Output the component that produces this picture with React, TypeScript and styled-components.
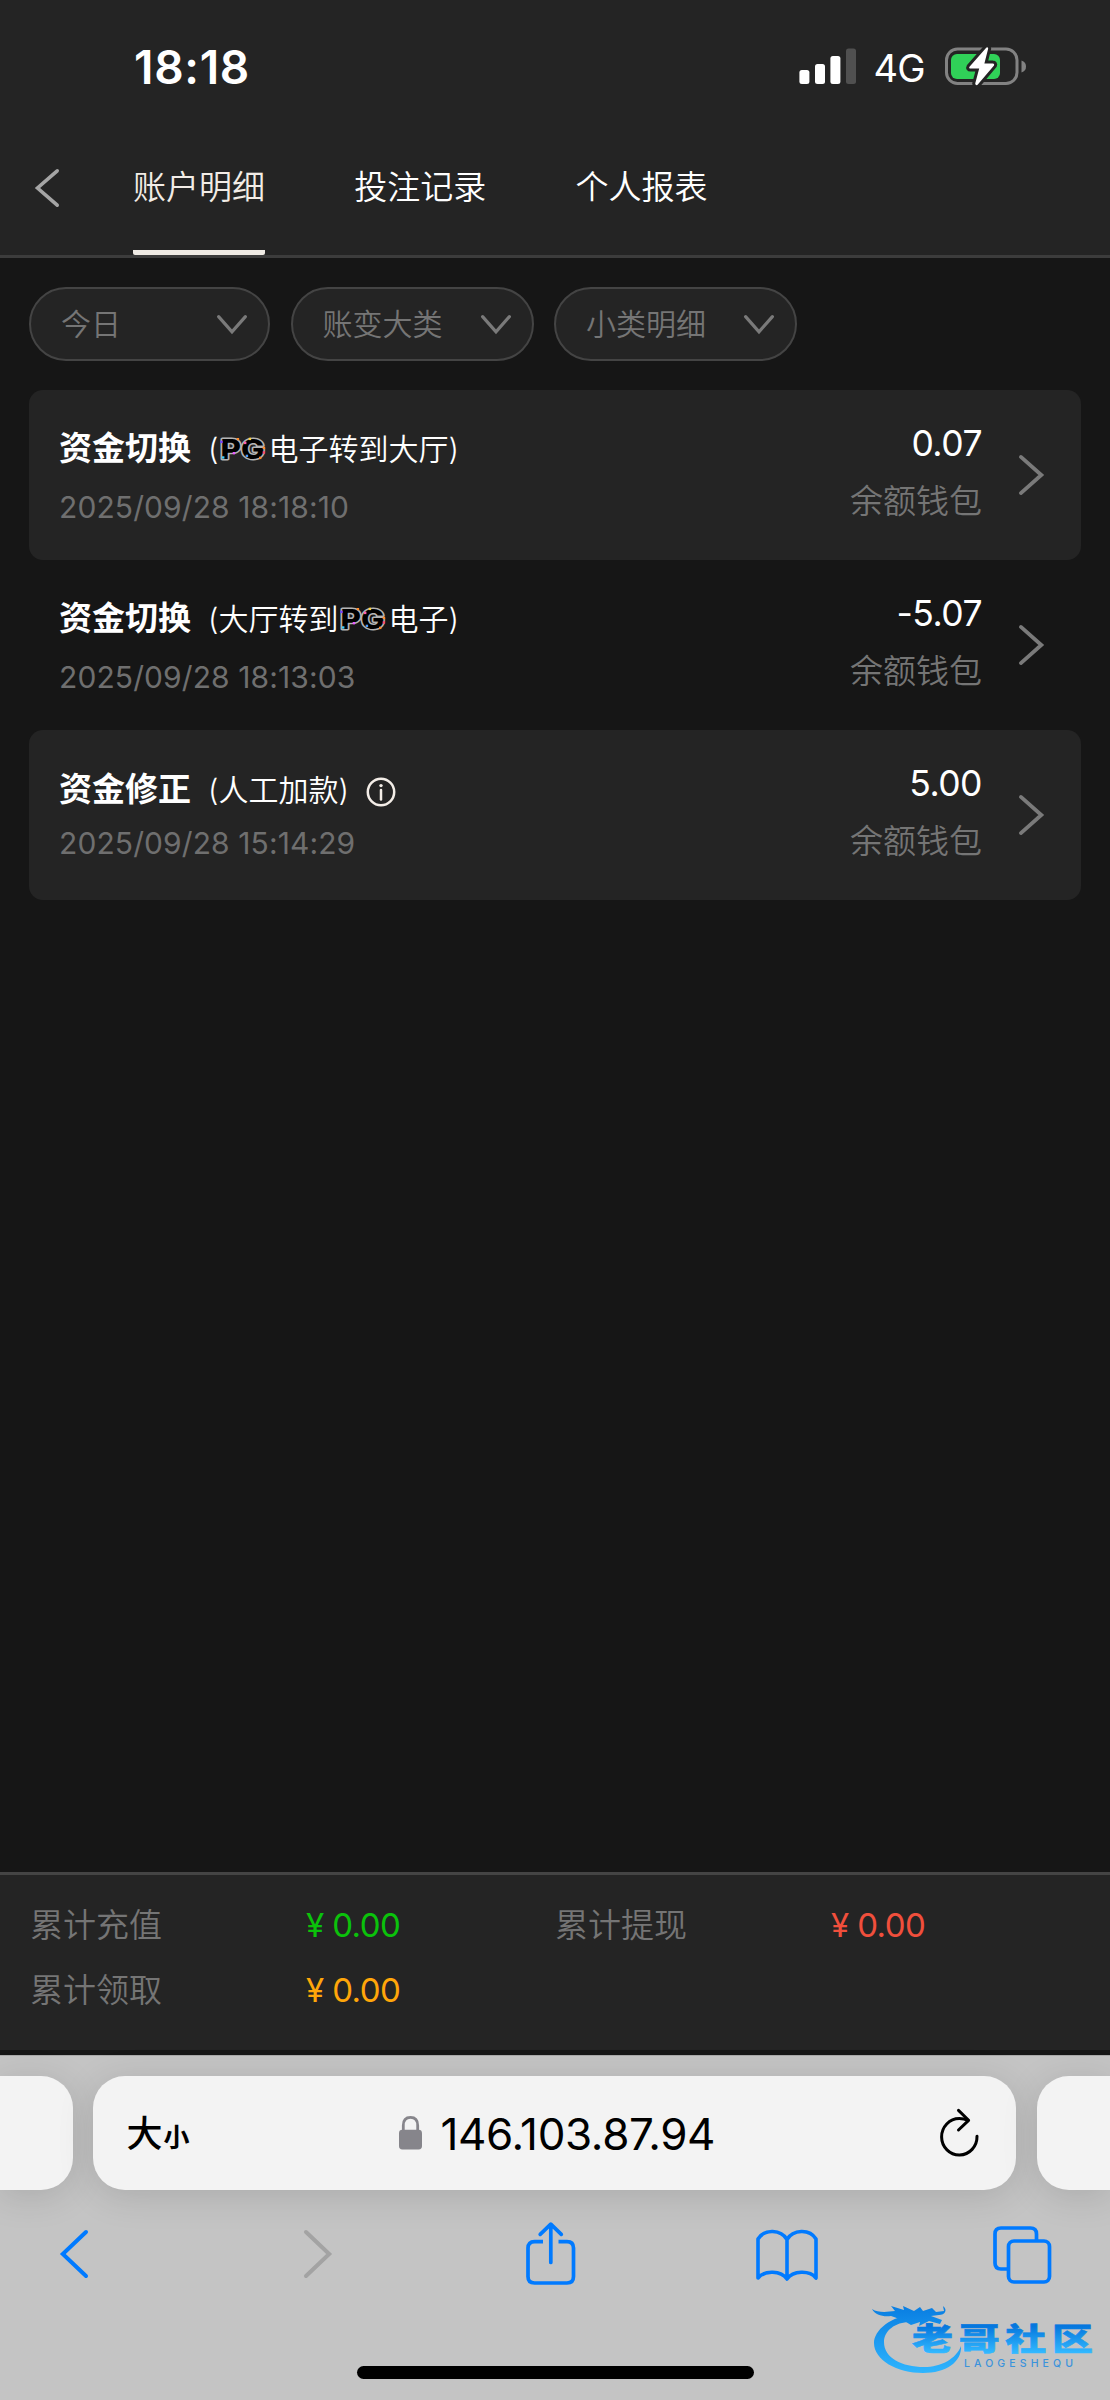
import React from "react";
import styled, { createGlobalStyle } from "styled-components";

const GlobalStyle = createGlobalStyle`
  * { box-sizing: border-box; }
  body {
    margin: 0;
    background: #161616;
    font-family: Inter, "Noto Sans CJK SC", sans-serif;
    -webkit-font-smoothing: antialiased;
  }
  svg { display: block; flex: none; overflow: visible; }
`;

const Screen = styled.div`
  width: 1110px;
  height: 2400px;
  display: flex;
  flex-direction: column;
  background: #161616;
  overflow: hidden;
`;

const Header = styled.header`
  height: 258px;
  background: #242424;
  border-bottom: 3px solid #3c3c3c;
  display: flex;
  flex-direction: column;
`;

const StatusBar = styled.div`
  height: 132px;
  padding: 0 83px 0 134px;
  display: flex;
  align-items: center;
  color: #fff;
`;

const Clock = styled.div`
  font-size: 46px;
  font-weight: 600;
  line-height: 50px;
  letter-spacing: 0.7px;
  margin: 2px auto 0 0;
`;

const Network = styled.div`
  font-size: 38px;
  font-weight: 400;
  line-height: 44px;
  letter-spacing: -0.7px;
  margin: 3px 20px 0 18px;
`;

const NavBar = styled.nav`
  flex: 1;
  display: flex;
  padding-left: 35px;
`;

const BackButton = styled.div`
  width: 98px;
  padding-top: 37px;
`;

const TabList = styled.div`
  display: flex;
  gap: 89.3px;
`;

const Tab = styled.div<{ $active?: boolean }>`
  height: 123px;
  padding-top: 31px;
  font-size: 33px;
  line-height: 48px;
  font-weight: 350;
  color: ${(p) => (p.$active ? "#f2ece6" : "#fff")};
  border-bottom: 5px solid ${(p) => (p.$active ? "#f0ebe5" : "transparent")};
  border-radius: 2px;
`;

const Filters = styled.div`
  display: flex;
  gap: 20.5px;
  padding: 29px 29px 0;
`;

const Filter = styled.div<{ $width: number }>`
  width: ${(p) => p.$width}px;
  height: 74px;
  border: 2px solid #444;
  border-radius: 37px;
  background: #242424;
  color: #757575;
  font-size: 30px;
  font-weight: 350;
  line-height: 70px;
  padding: 0 21px 0 30px;
  display: flex;
  align-items: center;
  justify-content: space-between;
`;

const Records = styled.div`
  flex: 1;
  padding: 29px 29px 0 29px;
`;

const Record = styled.div<{ $filled: boolean }>`
  height: 170px;
  border-radius: 14px;
  background: ${(p) => (p.$filled ? "#242424" : "transparent")};
  display: flex;
  padding: 0 37px 0 30px;
`;

const RecordMain = styled.div<{ $compact?: boolean }>`
  flex: 1;
  display: flex;
  flex-direction: column;
  padding-top: ${(p) => (p.$compact ? 35 : 34)}px;
  gap: ${(p) => (p.$compact ? 12 : 17)}px;
`;

const TitleRow = styled.div`
  display: flex;
  align-items: center;
  height: 48px;
  color: #fff;
`;

const Title = styled.div`
  font-size: 33px;
  font-weight: 700;
  line-height: 48px;
  width: 149px;
`;

const Detail = styled.div`
  display: flex;
  align-items: center;
  font-size: 30px;
  font-weight: 350;
  line-height: 48px;
  padding-top: 2px;
`;

const InfoSlot = styled.div`
  margin: 6px 0 0 17px;
`;

const Stamp = styled.div`
  font-size: 30px;
  line-height: 36px;
  font-weight: 400;
  letter-spacing: 0.1px;
  color: #6f6f6f;
`;

const RecordSide = styled.div`
  display: flex;
  flex-direction: column;
  align-items: flex-end;
  padding-top: 33px;
  margin-right: 37px;
`;

const Amount = styled.div`
  font-size: 35.5px;
  line-height: 42px;
  color: #fff;
  letter-spacing: -0.5px;
`;

const Wallet = styled.div`
  margin-top: 12px;
  font-size: 33px;
  line-height: 48px;
  font-weight: 350;
  color: #757575;
`;

const Arrow = styled.div`
  display: flex;
  align-items: center;
`;

const Summary = styled.section`
  height: 178px;
  margin-bottom: 5px;
  border-top: 3px solid #444;
  background: #242424;
  padding: 25px 30px 0;
  display: grid;
  grid-template-columns: 525px 525px;
  grid-auto-rows: 65px;
`;

const SummaryItem = styled.div`
  display: grid;
  grid-template-columns: 276px 1fr;
  font-size: 33px;
  line-height: 50px;
  font-weight: 350;
  color: #757575;
`;

const SummaryValue = styled.div<{ $color: string }>`
  color: ${(p) => p.$color};
  font-weight: 400;
  letter-spacing: -0.6px;
`;

const Browser = styled.footer`
  position: relative;
  height: 345px;
  background: #c4c4c4;
  border-top: 1px solid #a9a9a9;
  display: flex;
  flex-direction: column;
`;

const AddressRow = styled.div`
  display: grid;
  grid-template-columns: 72.7px 922.6px 73px;
  column-gap: 20.8px;
  padding-top: 20px;
`;

const BarCard = styled.div<{ $side?: "left" | "right" }>`
  height: 114px;
  background: #f3f3f3;
  border-radius: ${(p) =>
    p.$side === "left" ? "0 32px 32px 0" : p.$side === "right" ? "32px 0 0 32px" : "32px"};
  box-shadow: 0 6px 36px rgba(0, 0, 0, 0.13);
  display: flex;
  align-items: center;
  padding: ${(p) => (p.$side ? "0" : "0 36px 0 33px")};
  color: #000;
`;

const TextSize = styled.div`
  display: flex;
  align-items: baseline;
  gap: 1px;
  font-weight: 500;
  font-size: 36px;
  line-height: 50px;
  width: 273px;
  margin-top: 5px;
  small { font-size: 26px; font-weight: 700; }
`;

const Address = styled.div`
  display: flex;
  align-items: center;
  flex: 1;
  gap: 18px;
`;

const Host = styled.div`
  font-size: 44px;
  line-height: 54px;
  letter-spacing: -0.35px;
  margin-top: 1px;
`;

const Toolbar = styled.div`
  display: grid;
  grid-template-columns: 244px 222px 230px 237px 60px;
  padding: 28px 0 0 60px;
  height: 100px;
  align-items: start;
`;

const Tool = styled.div<{ $top: number }>`
  padding-top: ${(p) => p.$top}px;
`;

const HomeIndicator = styled.div`
  width: 397px;
  height: 13px;
  margin: auto auto 21px;
  border-radius: 7px;
  background: #000;
`;

const Watermark = styled.div`
  position: absolute;
  left: 870px;
  top: 246px;
`;

const Chevron = ({ w, h, dir, color, stroke }: {
  w: number; h: number; dir: "left" | "right" | "down"; color: string; stroke: number;
}) => {
  const s = stroke / 2;
  const points = {
    left: `${w - s},${s} ${s * 1.4},${h / 2} ${w - s},${h - s}`,
    right: `${s},${s} ${w - s * 1.4},${h / 2} ${s},${h - s}`,
    down: `${s},${s} ${w / 2},${h - s * 1.4} ${w - s},${s}`,
  }[dir];
  return (
    <svg width={w} height={h}>
      <polyline points={points} fill="none" stroke={color} strokeWidth={stroke} strokeLinecap="round" />
    </svg>
  );
};

const Signal = () => (
  <svg width="57" height="36" fill="#fff">
    <rect x="0.4" y="22" width="10" height="14" rx="2.5" />
    <rect x="16" y="16" width="10" height="20" rx="2.5" />
    <rect x="31.4" y="8" width="10" height="28" rx="2.5" />
    <rect x="47" y="0.5" width="10" height="35.5" rx="2.5" fill="#505050" />
  </svg>
);

const Battery = () => (
  <svg width="82" height="42" viewBox="0 0 82 42">
    <rect x="1.5" y="4" width="70.5" height="34.5" rx="11" fill="none" stroke="#828282" strokeWidth="3" />
    <path d="M76.5 15.5 Q81 17 81 21.5 Q81 26 76.5 27.5 Z" fill="#828282" />
    <rect x="6" y="9" width="49" height="25" rx="6" fill="#30d158" />
    <path
      d="M41 3 L24.5 21.8 Q23.5 23.6 25.6 23.6 L34.2 23.6 L30.2 38.6 Q30.6 41 32.6 39.8 L49 20.4 Q49.8 18.6 47.8 18.6 L39.4 18.4 L43.2 3.6 Q42.6 1.4 41 3 Z"
      fill="#fff" stroke="#242424" strokeWidth="6" strokeLinejoin="round" paintOrder="stroke"
    />
  </svg>
);

const sparks: [number, number, string][] = [
  [3.3, 6.7, "#7a3cff"], [19.7, 4, "#ff8a2a"], [15.7, 18, "#e65bff"], [5, 22.3, "#45d0ff"],
  [31.7, 3.7, "#ffd23c"], [27, 7.7, "#ff5fb0"], [45.7, 12.7, "#ff8a2a"], [28.7, 20.7, "#4a9cff"],
  [45.7, 17.3, "#ff4668"], [42, 22.7, "#ff8a2a"],
];

const PgMark = () => (
  <svg width="50" height="36" viewBox="0 -4 50 36">
    <text
      x="2.5" y="23.5" textLength="44" lengthAdjust="spacingAndGlyphs" fontFamily="Inter" fontWeight="800"
      fontSize="27" fill="#000" stroke="#b4b4b4" strokeWidth="3" strokeLinejoin="round" paintOrder="stroke"
    >PG</text>
    {sparks.map(([x, y, c]) => <rect key={`${x}-${y}`} x={x - 1} y={y - 1} width="2.4" height="2.4" fill={c} />)}
  </svg>
);

const Info = () => (
  <svg width="30" height="30" viewBox="0 0 30 30">
    <circle cx="15" cy="15" r="13.2" fill="none" stroke="#f3ede7" strokeWidth="2.5" />
    <circle cx="15" cy="8.6" r="1.7" fill="#f3ede7" />
    <path d="M15 13 V22.5" stroke="#f3ede7" strokeWidth="2.5" strokeLinecap="round" />
  </svg>
);

const Lock = () => (
  <svg width="23" height="34" viewBox="0 0 23 34">
    <path d="M4.3 15 V9.5 Q4.3 1.4 11.5 1.4 Q18.7 1.4 18.7 9.5 V15" fill="none" stroke="#86858b" strokeWidth="2.8" />
    <rect x="0" y="13.8" width="23" height="19.6" rx="3.4" fill="#86858b" />
  </svg>
);

const Reload = () => (
  <svg width="42" height="50" viewBox="0 0 42 50" fill="none" stroke="#000" strokeWidth="3" strokeLinecap="round" strokeLinejoin="round">
    <path d="M30 12.3 Q26 10.6 21.3 10.6 A17.7 18.2 0 1 0 39 28.3" />
    <path d="M20.5 2.4 L30.6 12.3 L20.5 22" />
  </svg>
);

const Share = () => (
  <svg width="50" height="64" viewBox="0 0 50 64" fill="none" stroke="#007aff" strokeWidth="3.7" strokeLinejoin="round">
    <path d="M17 19.6 H8.5 Q2 19.6 2 26 V54.5 Q2 61 8.5 61 H41 Q47.5 61 47.5 54.5 V26 Q47.5 19.6 41 19.6 H32.5" />
    <path d="M24.8 40.5 V3 M14.2 12.4 L24.8 2.2 L35.3 12.4" strokeLinecap="round" />
  </svg>
);

const Book = () => (
  <svg width="62" height="54" viewBox="0 0 62 54" fill="none" stroke="#007aff" strokeWidth="3.6" strokeLinejoin="round">
    <path d="M31 10.5 C25 0.5 8.5 -0.5 2 10 V49 C8.5 41 25 41.5 31 50 C37 41.5 53.5 41 60 49 V10 C53.5 -0.5 37 0.5 31 10.5 Z M31 10.5 V50" />
  </svg>
);

const Windows = () => (
  <svg width="60" height="60" viewBox="0 0 60 60" fill="none" stroke="#007aff" strokeWidth="3.7">
    <rect x="15.5" y="15" width="41" height="41" rx="5.5" />
    <path d="M43.5 15 V8 Q43.5 2 37.5 2 H8 Q2 2 2 8 V37 Q2 43 8 43 H16" />
  </svg>
);

const CommunityLogo = () => (
  <svg width="226" height="74" viewBox="0 0 226 74">
    <defs>
      <linearGradient id="sea" gradientUnits="userSpaceOnUse" x1="0" y1="6" x2="0" y2="72">
        <stop offset="0" stopColor="#0a7fe2" />
        <stop offset="1" stopColor="#2fb6ff" />
      </linearGradient>
      <linearGradient id="ink" gradientUnits="userSpaceOnUse" x1="0" y1="3" x2="0" y2="38">
        <stop offset="0" stopColor="#0577de" />
        <stop offset="1" stopColor="#32b8ff" />
      </linearGradient>
    </defs>
    <g fill="url(#sea)">
      <path d="M46 13 C20 13 4 29 4 41 C4 58 27 71 53 71 C76 71 92 60 91 44 C86 57 71 65 54 65 C32 65 14 56 14 40 C14 29 25 20 40 20 Z" />
      <path d="M2 7 C8 11 17 10 25 9 L21 4 L34 8 L33 4 L44 9 L50 5 L53 9 L62 6 L66 10 L74 9 L73 4 C78 8 75 13 69 13 L61 14 L72 18 L70 22 L59 19 L49 24 L50 20 L41 23 L36 20 C28 17 25 15 21 14 C13 15 5 13 2 7 Z" />
    </g>
    <g transform="translate(0 22) scale(1 0.75)">
      <text x="42" y="34" fontFamily="Noto Sans CJK SC" fontWeight="900" fontSize="41" textLength="181"
        fill="url(#ink)" stroke="url(#ink)" strokeWidth="0.8">老哥社区</text>
    </g>
    <text x="94" y="64.5" fontFamily="Inter" fontWeight="500" fontSize="10.5" textLength="109" fill="#3b93dc">LAOGESHEQU</text>
  </svg>
);

type Entry = { title: string; detail: React.ReactNode; time: string; amount: string; info?: boolean };

const entries: Entry[] = [
  { title: "资金切换", detail: <>(<PgMark />电子转到大厅)</>, time: "2025/09/28 18:18:10", amount: "0.07" },
  { title: "资金切换", detail: <>(大厅转到<PgMark />电子)</>, time: "2025/09/28 18:13:03", amount: "-5.07" },
  { title: "资金修正", detail: "(人工加款)", time: "2025/09/28 15:14:29", amount: "5.00", info: true },
];

const filters = [
  { label: "今日", width: 241 },
  { label: "账变大类", width: 243 },
  { label: "小类明细", width: 243 },
];

const totals = [
  { label: "累计充值", color: "#0bc20b" },
  { label: "累计提现", color: "#f04f3c" },
  { label: "累计领取", color: "#ffa60a" },
];

export default function App() {
  return (
    <>
      <GlobalStyle />
      <Screen>
        <Header>
          <StatusBar>
            <Clock>18:18</Clock>
            <Signal />
            <Network>4G</Network>
            <Battery />
          </StatusBar>
          <NavBar>
            <BackButton><Chevron w={24} h={38} dir="left" color="#a5a5a5" stroke={3.6} /></BackButton>
            <TabList>
              <Tab $active>账户明细</Tab>
              <Tab>投注记录</Tab>
              <Tab>个人报表</Tab>
            </TabList>
          </NavBar>
        </Header>

        <Filters>
          {filters.map((f) => (
            <Filter key={f.label} $width={f.width}>
              {f.label}
              <Chevron w={30} h={19} dir="down" color="#7a7a7a" stroke={3.2} />
            </Filter>
          ))}
        </Filters>

        <Records>
          {entries.map((e, i) => (
            <Record key={e.time} $filled={i % 2 === 0}>
              <RecordMain $compact={e.info}>
                <TitleRow>
                  <Title>{e.title}</Title>
                  <Detail>{e.detail}</Detail>
                  {e.info && <InfoSlot><Info /></InfoSlot>}
                </TitleRow>
                <Stamp>{e.time}</Stamp>
              </RecordMain>
              <RecordSide>
                <Amount>{e.amount}</Amount>
                <Wallet>余额钱包</Wallet>
              </RecordSide>
              <Arrow><Chevron w={25} h={40} dir="right" color="#7a7a7a" stroke={3.8} /></Arrow>
            </Record>
          ))}
        </Records>

        <Summary>
          {totals.map((t) => (
            <SummaryItem key={t.label}>
              <div>{t.label}</div>
              <SummaryValue $color={t.color}>¥ 0.00</SummaryValue>
            </SummaryItem>
          ))}
        </Summary>

        <Browser>
          <AddressRow>
            <BarCard $side="left" />
            <BarCard>
              <TextSize>大<small>小</small></TextSize>
              <Address><Lock /><Host>146.103.87.94</Host></Address>
              <Reload />
            </BarCard>
            <BarCard $side="right" />
          </AddressRow>
          <Toolbar>
            <Tool $top={12}><Chevron w={28} h={48} dir="left" color="#007aff" stroke={4} /></Tool>
            <Tool $top={12}><Chevron w={28} h={48} dir="right" color="#a3a3a3" stroke={4} /></Tool>
            <Tool $top={4}><Share /></Tool>
            <Tool $top={11}><Book /></Tool>
            <Tool $top={8}><Windows /></Tool>
          </Toolbar>
          <HomeIndicator />
          <Watermark><CommunityLogo /></Watermark>
        </Browser>
      </Screen>
    </>
  );
}
